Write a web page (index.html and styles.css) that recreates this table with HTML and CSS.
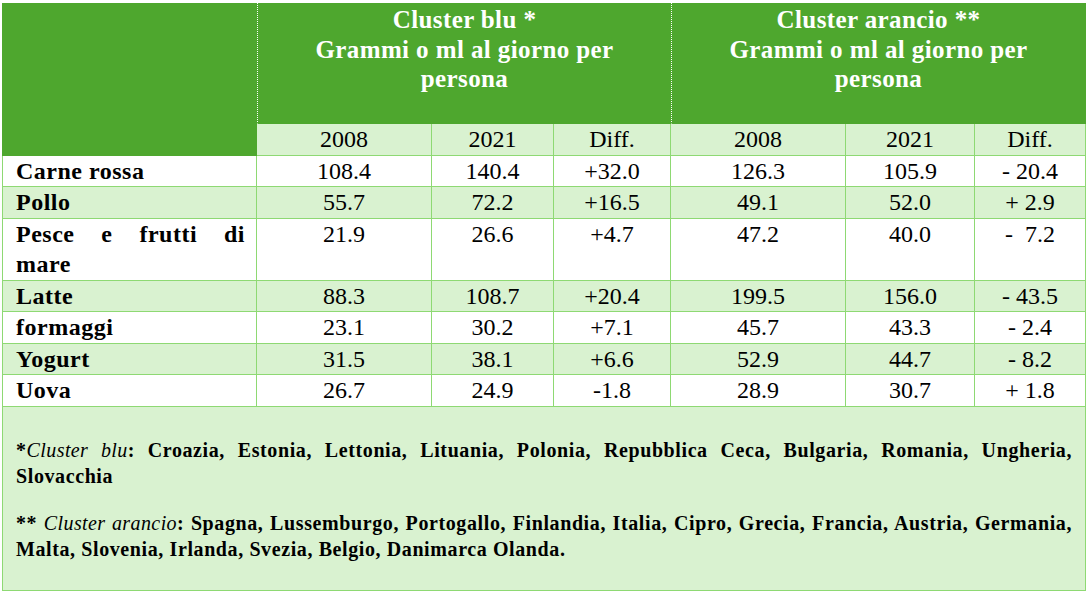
FILE: index.html
```html
<!DOCTYPE html>
<html lang="it">
<head>
<meta charset="utf-8">
<title>Cluster blu e arancio</title>
<link rel="stylesheet" href="styles.css">
</head>
<body>
<table class="data">
  <colgroup>
    <col class="c-label">
    <col class="c-y1">
    <col class="c-y2">
    <col class="c-d">
    <col class="c-y1b">
    <col class="c-y2b">
    <col class="c-db">
  </colgroup>
  <thead>
    <tr class="head-main">
      <th class="corner" rowspan="2"></th>
      <th class="cluster" colspan="3">Cluster blu *<br>Grammi o ml al giorno per<br>persona</th>
      <th class="cluster last" colspan="3">Cluster arancio **<br>Grammi o ml al giorno per<br>persona</th>
    </tr>
    <tr class="head-sub">
      <th>2008</th><th>2021</th><th>Diff.</th>
      <th>2008</th><th>2021</th><th>Diff.</th>
    </tr>
  </thead>
  <tbody>
    <tr class="odd"><td class="label">Carne rossa</td><td>108.4</td><td>140.4</td><td>+32.0</td><td>126.3</td><td>105.9</td><td>- 20.4</td></tr>
    <tr class="even"><td class="label">Pollo</td><td>55.7</td><td>72.2</td><td>+16.5</td><td>49.1</td><td>52.0</td><td>+ 2.9</td></tr>
    <tr class="odd"><td class="label">Pesce e frutti di mare</td><td>21.9</td><td>26.6</td><td>+4.7</td><td>47.2</td><td>40.0</td><td>-&nbsp; 7.2</td></tr>
    <tr class="even"><td class="label">Latte</td><td>88.3</td><td>108.7</td><td>+20.4</td><td>199.5</td><td>156.0</td><td>- 43.5</td></tr>
    <tr class="odd"><td class="label">formaggi</td><td>23.1</td><td>30.2</td><td>+7.1</td><td>45.7</td><td>43.3</td><td>- 2.4</td></tr>
    <tr class="even"><td class="label">Yogurt</td><td>31.5</td><td>38.1</td><td>+6.6</td><td>52.9</td><td>44.7</td><td>- 8.2</td></tr>
    <tr class="odd"><td class="label">Uova</td><td>26.7</td><td>24.9</td><td>-1.8</td><td>28.9</td><td>30.7</td><td>+ 1.8</td></tr>
    <tr class="notes">
      <td colspan="7">
        <p><span>*</span><em>Cluster blu</em><span>: Croazia, Estonia, Lettonia, Lituania, Polonia, Repubblica Ceca, Bulgaria, Romania, Ungheria,</span> <span>Slovacchia</span></p>
        <p><span>**</span> <em>Cluster arancio</em><span>: Spagna, Lussemburgo, Portogallo, Finlandia, Italia, Cipro, Grecia, Francia, Austria, Germania,</span> <span>Malta, Slovenia, Irlanda, Svezia, Belgio, Danimarca Olanda.</span></p>
      </td>
    </tr>
  </tbody>
</table>
</body>
</html>
```

FILE: styles.css
```css
html, body {
  background: #ffffff;
}
body {
  margin: 3px 0 0 2px;
  font-family: "Liberation Serif", "Times New Roman", serif;
  color: #000000;
}
.data {
  border-collapse: separate;
  border-spacing: 0;
  table-layout: fixed;
  width: 1084px;
}
.c-label { width: 255px; }
.c-y1 { width: 175px; }
.c-y2 { width: 122px; }
.c-d { width: 117px; }
.c-y1b { width: 175px; }
.c-y2b { width: 129px; }
.c-db { width: 111px; }

.data th,
.data td {
  padding: 0;
  border-right: 1px solid #8ed973;
  border-bottom: 1px solid #8ed973;
  text-align: center;
  font-size: 24px;
  line-height: 30.5px;
  font-weight: normal;
  vertical-align: top;
}
.data td:first-child,
.data tbody td.label {
  border-left: 1px solid #8ed973;
}

/* header */
.head-main th {
  background: #4ea72e;
  color: #ffffff;
  font-weight: bold;
  font-size: 25px;
  letter-spacing: 0.4px;
  line-height: 29.5px;
  height: 118px;
  padding-top: 2px;
  border-bottom: 1px solid #4ea72e;
}
.head-main th.corner {
  border-left: 1px solid #4ea72e;
  border-right: none;
  border-bottom: none;
  padding: 0;
}
.head-main th.cluster {
  border-left: 1px dotted #ffffff;
  border-right: none;
}
.head-main th.cluster.last {
  border-right: 1px solid #4ea72e;
}
.head-sub th {
  background: #d9f2d0;
  height: 30.5px;
}

/* body */
.odd td { background: #ffffff; }
.even td { background: #d9f2d0; }
.data td.label {
  font-weight: bold;
  letter-spacing: 0.5px;
  text-align: justify;
  padding: 0 11px 0 13px;
}

/* notes */
.notes td {
  background: #d9f2d0;
  text-align: justify;
  padding: 30px 13px 27px 13px;
  font-size: 20px;
  font-weight: bold;
  letter-spacing: 0.6px;
  line-height: 26.5px;
}
.notes p {
  margin: 0;
}
.notes p + p {
  margin-top: 20px;
}
.notes em {
  font-weight: normal;
  font-style: italic;
  letter-spacing: 0.4px;
}
```
